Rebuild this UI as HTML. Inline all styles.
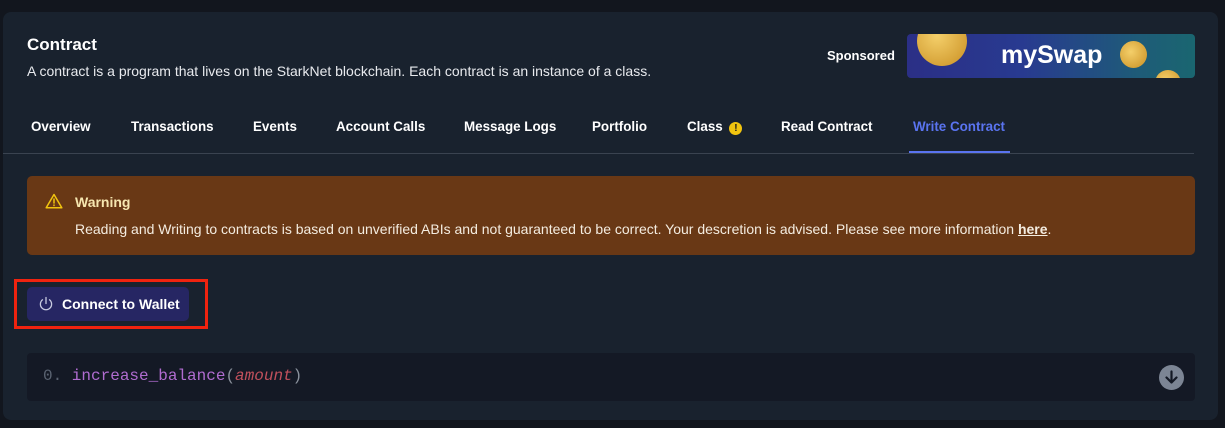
<!DOCTYPE html>
<html><head><meta charset="utf-8"><style>
*{box-sizing:border-box;margin:0;padding:0}
body{width:1225px;height:428px;background:#12161e;font-family:"Liberation Sans",sans-serif;color:#fff;position:relative;overflow:hidden}
.card{position:absolute;left:3px;top:12px;width:1215px;height:408px;background:#19222e;border-radius:8px}
.title{position:absolute;left:24px;top:23px;font-size:17px;font-weight:bold}
.sub{position:absolute;left:24px;top:51px;font-size:14px;color:#e8eaee}
.spon{position:absolute;left:824px;top:36px;font-size:13px;font-weight:bold}
.banner{position:absolute;left:904px;top:22px;width:288px;height:44px;border-radius:4px;overflow:hidden;background:linear-gradient(90deg,#2b2f86 0%,#283a90 40%,#1e5b78 80%,#1a6670 100%)}
.banner .t{position:absolute;left:94px;top:7px;font-size:25px;font-weight:bold;color:#fff}
.coin{position:absolute;border-radius:50%;background:radial-gradient(circle at 40% 40%,#f4cf6a,#c98f22)}
.tabs{position:absolute;left:0;top:107px;font-size:13.4px;font-weight:bold}
.tabs span{position:absolute;white-space:nowrap}
.line{position:absolute;left:0;top:141px;width:1191px;height:1px;background:#3a4350}
.act{position:absolute;left:906px;top:139px;width:101px;height:2px;background:#5a74f0}
.warn{position:absolute;left:24px;top:164px;width:1168px;height:79px;background:#693815;border-radius:5px}
.warn .h{position:absolute;left:48px;top:18px;font-size:14px;font-weight:bold;color:#f6e6b0}
.warn .b{position:absolute;left:48px;top:45px;font-size:14px;color:#f4ece0}
.warn u{font-weight:bold}
.red{position:absolute;left:11px;top:267px;width:194px;height:50px;border:3px solid #f0230f}
.btn{position:absolute;left:24px;top:275px;width:162px;height:34px;background:#262663;border-radius:5px;font-size:14px;font-weight:bold}
.btn span{position:absolute;left:35px;top:9px}
.code{position:absolute;left:24px;top:341px;width:1168px;height:48px;background:#141925;border-radius:4px;font-family:"Liberation Mono",monospace;font-size:16px}
.code .t{position:absolute;left:16px;top:14px;color:#b06cd0}
.dl{position:absolute;left:1132px;top:12px;width:25px;height:25px;border-radius:50%;background:#7c8594}
</style></head><body>
<div class="card">
<div class="title">Contract</div>
<div class="sub">A contract is a program that lives on the StarkNet blockchain. Each contract is an instance of a class.</div>
<div class="spon">Sponsored</div>
<div class="banner">
<div class="coin" style="left:10px;top:-18px;width:50px;height:50px"></div>
<div class="t">mySwap</div>
<div class="coin" style="left:213px;top:7px;width:27px;height:27px"></div>
<div class="coin" style="left:248px;top:36px;width:26px;height:26px"></div>
</div>
<div class="tabs">
<span style="left:28px">Overview</span>
<span style="left:128px">Transactions</span>
<span style="left:250px">Events</span>
<span style="left:333px">Account Calls</span>
<span style="left:461px">Message Logs</span>
<span style="left:589px">Portfolio</span>
<span style="left:684px">Class <span style="position:relative;display:inline-block;width:13px;height:13px;border-radius:50%;background:#f1c40f;color:#1a1a1a;font-size:10px;text-align:center;line-height:13px;top:0;margin-left:3px">!</span></span>
<span style="left:778px">Read Contract</span>
<span style="left:910px;color:#5a74f0">Write Contract</span>
</div>
<div class="line"></div><div class="act"></div>
<div class="warn">
<svg style="position:absolute;left:18px;top:17px" width="18" height="16" viewBox="0 0 18 16"><path d="M9 1.5L16.8 14.8H1.2Z" fill="none" stroke="#f1c40f" stroke-width="1.5" stroke-linejoin="round"/><path d="M9 6v4M9 12v.5" stroke="#f1c40f" stroke-width="1.5" stroke-linecap="round"/></svg>
<div class="h">Warning</div>
<div class="b">Reading and Writing to contracts is based on unverified ABIs and not guaranteed to be correct. Your descretion is advised. Please see more information <u>here</u>.</div>
</div>
<div class="red"></div>
<div class="btn"><svg style="position:absolute;left:11px;top:9px" width="16" height="16" viewBox="0 0 16 16"><path d="M4.5 3.8A5.6 5.6 0 1 0 11.5 3.8" fill="none" stroke="#c8cbe0" stroke-width="1.3" stroke-linecap="round"/><path d="M8 1.5v6" stroke="#c8cbe0" stroke-width="1.3" stroke-linecap="round"/></svg><span>Connect to Wallet</span></div>
<div class="code"><div class="t"><span style="color:#5b6472">0.</span> increase_balance<span style="color:#8a919c">(</span><i style="color:#c0505c">amount</i><span style="color:#8a919c">)</span></div>
<div class="dl"><svg width="25" height="25" viewBox="0 0 25 25"><path d="M12.5 6.5v11M7.5 12.5l5 5 5-5" fill="none" stroke="#141925" stroke-width="2.2" stroke-linecap="round" stroke-linejoin="round"/></svg></div></div>
</div>
</body></html>
